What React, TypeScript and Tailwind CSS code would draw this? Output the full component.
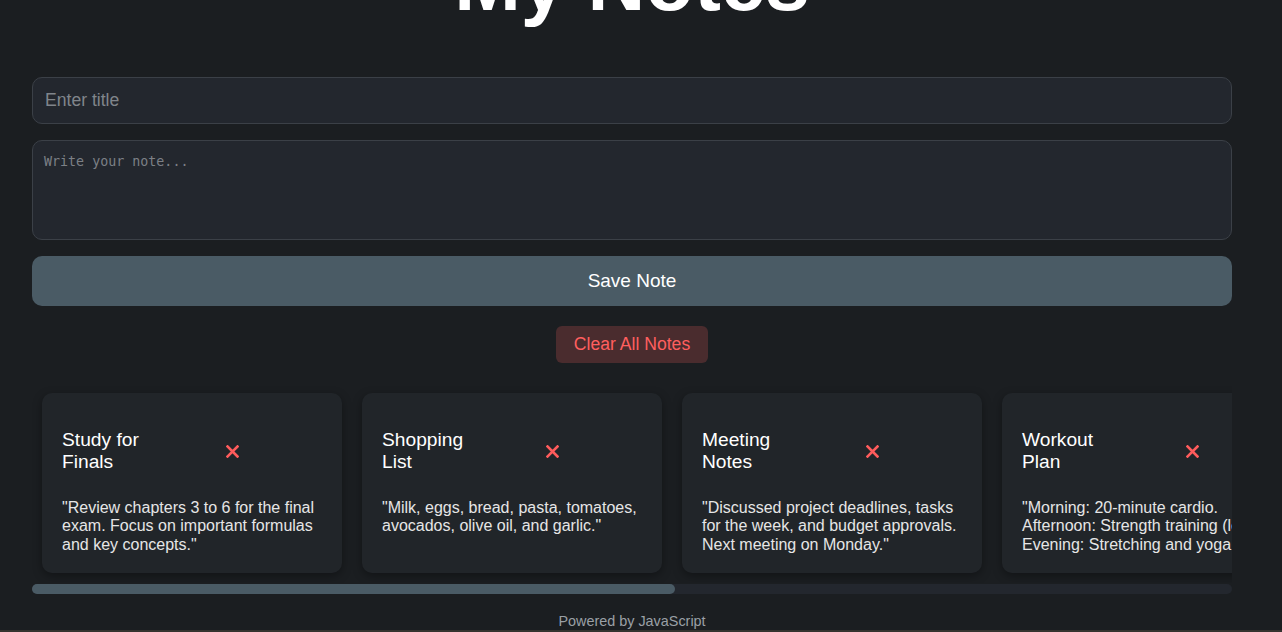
import React from "react";

const notes = [
  { title: "Study for Finals", body: '"Review chapters 3 to 6 for the final exam. Focus on important formulas and key concepts."' },
  { title: "Shopping List", body: '"Milk, eggs, bread, pasta, tomatoes, avocados, olive oil, and garlic."' },
  { title: "Meeting Notes", body: '"Discussed project deadlines, tasks for the week, and budget approvals. Next meeting on Monday."' },
  { title: "Workout Plan", body: '"Morning: 20-minute cardio. Afternoon: Strength training (legs). Evening: Stretching and yoga."' },
  { title: "Book Ideas", body: '"A mystery novel set in a small coastal town with an unexpected twist."' },
  { title: "Travel Plans", body: '"Book flights, reserve hotel, and plan the itinerary for the summer trip."' },
  { title: "Daily Goals", body: '"Read 20 pages, drink more water, and finish the project report."' },
];

function XIcon() {
  return (
    <svg width="13" height="13" viewBox="0 0 13 13" fill="none">
      <path d="M1.5 1.5 L11.5 11.5 M11.5 1.5 L1.5 11.5" stroke="#ff5c5c" strokeWidth="2.6" strokeLinecap="square" />
    </svg>
  );
}

export default function App() {
  return (
    <div className="h-[632px] bg-[#1b1e21] font-['Liberation_Sans',Arial,sans-serif] overflow-hidden flex flex-col">
      <div className="w-[1200px] ml-[32px] mt-[-63px] flex flex-col">
        <h1 className="text-[80px] font-bold text-white text-center leading-[92px] m-0">My Notes</h1>
        <input
          className="mt-[48px] h-[47px] w-full rounded-[10px] border border-[#3b4047] bg-[#23272e] px-[12px] text-[17.6px] text-white placeholder:text-[#80858b] outline-none"
          placeholder="Enter title"
        />
        <textarea
          className="mt-[16px] h-[100px] w-full resize-none rounded-[10px] border border-[#3b4047] bg-[#23272e] px-[11px] py-[13px] font-['DejaVu_Sans_Mono',monospace] text-[13.33px] leading-[16px] text-white placeholder:text-[#7c8086] outline-none"
          placeholder="Write your note..."
        />
        <button className="mt-[16px] h-[50px] w-full rounded-[10px] bg-[#4a5b65] text-[19px] text-white">
          Save Note
        </button>
        <div className="mt-[20px] flex justify-center">
          <button className="rounded-[6px] bg-[#4a2c2e] px-[18px] py-[8px] text-[17.6px] leading-[21px] text-[#ff5f5f]">
            Clear All Notes
          </button>
        </div>
        <div className="mt-[20px] flex flex-col">
          <div className="flex gap-[20px] overflow-hidden p-[10px]">
            {notes.map((n) => (
              <div
                key={n.title}
                className="w-[300px] h-[180px] shrink-0 rounded-[10px] bg-[#212529] px-[20px] pt-[36px] shadow-[0_3px_10px_rgba(0,0,0,0.35)]"
              >
                <div className="flex items-center">
                  <h3 className="w-[100px] shrink-0 text-[19.2px] leading-[22px] text-white">{n.title}</h3>
                  <button className="ml-[64px] flex items-center justify-center">
                    <XIcon />
                  </button>
                </div>
                <p className="mt-[26px] text-[16px] leading-[18.4px] text-[#e6e6e6] whitespace-normal">{n.body}</p>
              </div>
            ))}
          </div>
          <div className="mt-[1px] h-[10px] w-full rounded-[5px] bg-[#23272e]">
            <div className="h-full w-[643px] rounded-[5px] bg-[#4a5b65]" />
          </div>
        </div>
        <footer className="mt-[19px] text-center text-[14.4px] leading-[17px] text-[#9aa0a6]">
          Powered by JavaScript
        </footer>
      </div>
      <div className="mt-auto h-[2px] w-full bg-[#35332f]" />
    </div>
  );
}
